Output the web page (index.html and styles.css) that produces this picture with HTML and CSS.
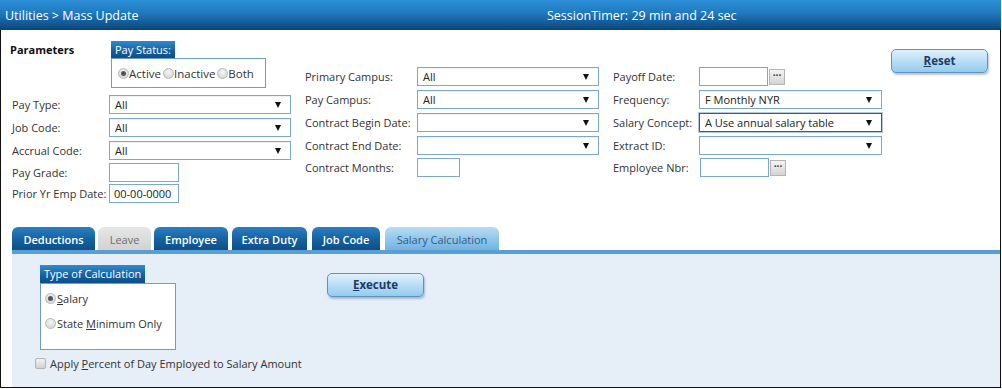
FILE: index.html
```html
<!DOCTYPE html>
<html>
<head>
<meta charset="utf-8">
<link rel="stylesheet" href="styles.css">
</head>
<body>
<div class="frame">
  <div class="header">
    <div class="title">Utilities &gt; Mass Update</div>
    <div class="timer">SessionTimer: 29 min and 24 sec</div>
  </div>

  <div class="params">
    <div class="col-left">
      <div class="top-row">
        <div class="params-title">Parameters</div>
        <div class="group">
          <div class="legend legend-pay">Pay Status:</div>
          <div class="group-box pay-box">
            <span class="radio checked"></span><span class="opt">Active</span>
            <span class="radio"></span><span class="opt">Inactive</span>
            <span class="radio"></span><span class="opt">Both</span>
          </div>
        </div>
      </div>
      <div class="row"><div class="label lw-left">Pay Type:</div><div class="select sw-left"><span>All</span><span class="arrow"></span></div></div>
      <div class="row"><div class="label lw-left">Job Code:</div><div class="select sw-left"><span>All</span><span class="arrow"></span></div></div>
      <div class="row r-tight"><div class="label lw-left">Accrual Code:</div><div class="select sw-left"><span>All</span><span class="arrow"></span></div></div>
      <div class="row r-tighter"><div class="label lw-left">Pay Grade:</div><div class="input iw-short"></div></div>
      <div class="row"><div class="label lw-left">Prior Yr Emp Date:</div><div class="input iw-short">00-00-0000</div></div>
    </div>

    <div class="col-mid">
      <div class="row"><div class="label lw-mid">Primary Campus:</div><div class="select sw-mid"><span>All</span><span class="arrow"></span></div></div>
      <div class="row"><div class="label lw-mid">Pay Campus:</div><div class="select sw-mid"><span>All</span><span class="arrow"></span></div></div>
      <div class="row"><div class="label lw-mid">Contract Begin Date:</div><div class="select sw-mid"><span></span><span class="arrow"></span></div></div>
      <div class="row r-tight"><div class="label lw-mid">Contract End Date:</div><div class="select sw-mid"><span></span><span class="arrow"></span></div></div>
      <div class="row"><div class="label lw-mid">Contract Months:</div><div class="input iw-months"></div></div>
    </div>

    <div class="col-right">
      <div class="row"><div class="label lw-right">Payoff Date:</div><div class="input iw-date"></div><div class="dots">···</div></div>
      <div class="row"><div class="label lw-right">Frequency:</div><div class="select sw-right"><span>F Monthly NYR</span><span class="arrow"></span></div></div>
      <div class="row"><div class="label lw-right">Salary Concept:</div><div class="select sw-right focused"><span>A Use annual salary table</span><span class="arrow"></span></div></div>
      <div class="row r-tight"><div class="label lw-right">Extract ID:</div><div class="select sw-right"><span></span><span class="arrow"></span></div></div>
      <div class="row"><div class="label lw-right">Employee Nbr:</div><div class="input iw-date emp"></div><div class="dots">···</div></div>
    </div>

    <div class="btn reset"><u>R</u>eset</div>
  </div>

  <div class="tabs">
    <div class="tab t-ded">Deductions</div>
    <div class="tab t-leave disabled">Leave</div>
    <div class="tab t-emp">Employee</div>
    <div class="tab t-extra">Extra Duty</div>
    <div class="tab t-job">Job Code</div>
    <div class="tab t-sal active">Salary Calculation</div>
  </div>
  <div class="tab-line"></div>
  <div class="panel">
    <div class="calc-col">
      <div class="group calc-group">
        <div class="legend legend-calc">Type of Calculation</div>
        <div class="group-box calc-box">
          <div class="calc-opt"><span class="radio checked"></span><span><u>S</u>alary</span></div>
          <div class="calc-opt"><span class="radio"></span><span>State <u>M</u>inimum Only</span></div>
        </div>
      </div>
      <div class="check-row"><span class="checkbox"></span><span>Apply <u>P</u>ercent of Day Employed to Salary Amount</span></div>
    </div>
    <div class="btn execute"><u>E</u>xecute</div>
  </div>
</div>
</body>
</html>
```

FILE: styles.css
```css
* { box-sizing: border-box; }
body {
  margin: 0;
  font-family: "Open Sans", "Noto Sans", sans-serif;
  font-size: 11px;
  color: #333;
  background: #fff;
}
.frame {
  width: 1001px;
  height: 388px;
  border-left: 1px solid #111;
  border-right: 1px solid #111;
  border-bottom: 1px solid #111;
  display: flex;
  flex-direction: column;
}
.header {
  height: 30px;
  margin-left: -1px;
  margin-right: -1px;
  display: flex;
  align-items: center;
  color: #fff;
  font-size: 12.5px;
  background: linear-gradient(#2d90d8 0%, #1f78bd 45%, #145c98 75%, #0c4478 100%);
  flex-shrink: 0;
}
.title { width: 547px; padding-left: 5px; }

.params {
  height: 197px;
  display: flex;
  align-items: flex-start;
  padding-top: 11px;
  flex-shrink: 0;
}
.col-left { margin-left: 9px; width: 295px; }
.col-mid { width: 308px; margin-top: 26px; }
.col-right { width: 278px; margin-top: 26px; }

.top-row { display: flex; height: 54px; }
.params-title { width: 101px; font-weight: 700; color: #111; padding-top: 1px; }

.group { display: flex; flex-direction: column; align-items: flex-start; }
.legend {
  color: #fff;
  background: linear-gradient(#2f8ad0, #14609e 60%, #0d4f88);
  font-size: 11px;
  padding-left: 4px;
  white-space: nowrap;
  overflow: hidden;
}
.legend-pay { width: 64px; height: 17px; line-height: 17px; }
.group-box { border: 1px solid #6b9fca; background: #fff; }
.pay-box {
  width: 155px;
  height: 30px;
  display: flex;
  align-items: center;
  padding-left: 6px;
  font-size: 11.5px;
}
.radio {
  display: inline-block;
  width: 11px;
  height: 11px;
  border-radius: 50%;
  border: 1px solid #b9b9b9;
  background: radial-gradient(circle at 50% 35%, #f6f6f6, #cfcfcf);
  position: relative;
  flex-shrink: 0;
}
.radio.checked::after {
  content: "";
  position: absolute;
  left: 2px;
  top: 2px;
  width: 5px;
  height: 5px;
  border-radius: 50%;
  background: #555;
}
.opt { margin-right: 2px; color: #333; }

.row { display: flex; align-items: center; height: 19px; margin-bottom: 4px; }
.row.r-tight { margin-bottom: 3px; }
.row.r-tighter { margin-bottom: 2px; }
.label { color: #333; white-space: nowrap; }
.lw-left { width: 99px; padding-left: 2px; }
.lw-mid { width: 112px; }
.lw-right { width: 86px; }

.select {
  height: 19px;
  border: 1px solid #7ea8cb;
  box-shadow: inset 0 1px 1px rgba(0,0,0,0.06);
  background: #fff;
  display: flex;
  align-items: center;
  justify-content: space-between;
  padding: 0 9px 0 5px;
  color: #222;
}
.select.focused { border-color: #2c5f96; box-shadow: 0 0 0 1px rgba(44,95,150,0.35); }
.sw-left { width: 182px; }
.sw-mid { width: 182px; }
.sw-right { width: 183px; }
.arrow {
  width: 0;
  height: 0;
  border-left: 3.5px solid transparent;
  border-right: 3.5px solid transparent;
  border-top: 6px solid #111;
}
.input {
  height: 19px;
  border: 1px solid #7ea8cb;
  background: #fff;
  padding-left: 4px;
  line-height: 17px;
  color: #222;
}
.iw-short { width: 70px; }
.iw-months { width: 43px; }
.iw-date { width: 69px; }
.emp { margin-left: 1px; }
.dots {
  width: 16px;
  height: 16px;
  margin-left: 1px;
  background: linear-gradient(#f4f4f4, #d4d4d4);
  border: 1px solid #b5b5b5;
  font-size: 10px;
  line-height: 11px;
  text-align: center;
  color: #333;
  font-weight: 700;
}

.btn {
  width: 97px;
  height: 24px;
  border: 1px solid #5f93ba;
  border-radius: 5px;
  background: linear-gradient(#e0f1fc, #b9def5 50%, #93cbee);
  box-shadow: 1px 2px 2px rgba(60,90,120,0.35);
  color: #1d3a69;
  font-weight: 700;
  font-size: 11.5px;
  display: flex;
  align-items: center;
  justify-content: center;
  padding-bottom: 2px;
}
.reset { margin-top: 8px; }

.tabs { display: flex; margin-left: 11px; height: 23px; flex-shrink: 0; }
.tab {
  height: 23px;
  border-radius: 6px 6px 0 0;
  background: linear-gradient(#2a7fc4, #15619f 55%, #0d4f88);
  color: #fff;
  font-weight: 600;
  font-size: 11px;
  display: flex;
  align-items: center;
  justify-content: center;
  padding-top: 2px;
}
.tab.disabled { background: linear-gradient(#e6e6e6, #d2d2d2); color: #6e6e6e; font-weight: 400; }
.tab.active { background: linear-gradient(#b7dcf3, #8cc4ea 60%, #72b3e1); color: #2d5e86; font-weight: 400; }
.t-ded { width: 83px; }
.t-leave { width: 53px; margin-left: 3px; }
.t-emp { width: 74px; margin-left: 3px; }
.t-extra { width: 75px; margin-left: 4px; }
.t-job { width: 68px; margin-left: 5px; }
.t-sal { width: 114px; margin-left: 5px; }
.tab-line { height: 4px; margin-left: 11px; background: #5a9fd3; flex-shrink: 0; }

.panel {
  flex: 1;
  margin-left: 11px;
  background: #e6eef8;
  display: flex;
  align-items: flex-start;
}
.calc-col { margin-left: 23px; padding-top: 11px; width: 152px; flex-shrink: 0; }
.calc-group { margin-left: 5px; }
.legend-calc { width: 105px; height: 18px; line-height: 18px; padding-left: 4px; }
.calc-box { width: 136px; height: 67px; padding: 8px 0 0 4px; font-size: 11px; }
.calc-opt { display: flex; align-items: center; gap: 1px; height: 12px; margin-bottom: 13px; white-space: nowrap; }
.check-row { display: flex; align-items: center; gap: 4px; margin-top: 6px; white-space: nowrap; font-size: 11px; }
.checkbox {
  display: inline-block;
  flex-shrink: 0;
  width: 11px;
  height: 11px;
  border: 1px solid #b3b3b3;
  border-radius: 2px;
  background: linear-gradient(#f3f3f3, #d2d2d2);
}
.execute { margin-left: 140px; margin-top: 19px; }
```
